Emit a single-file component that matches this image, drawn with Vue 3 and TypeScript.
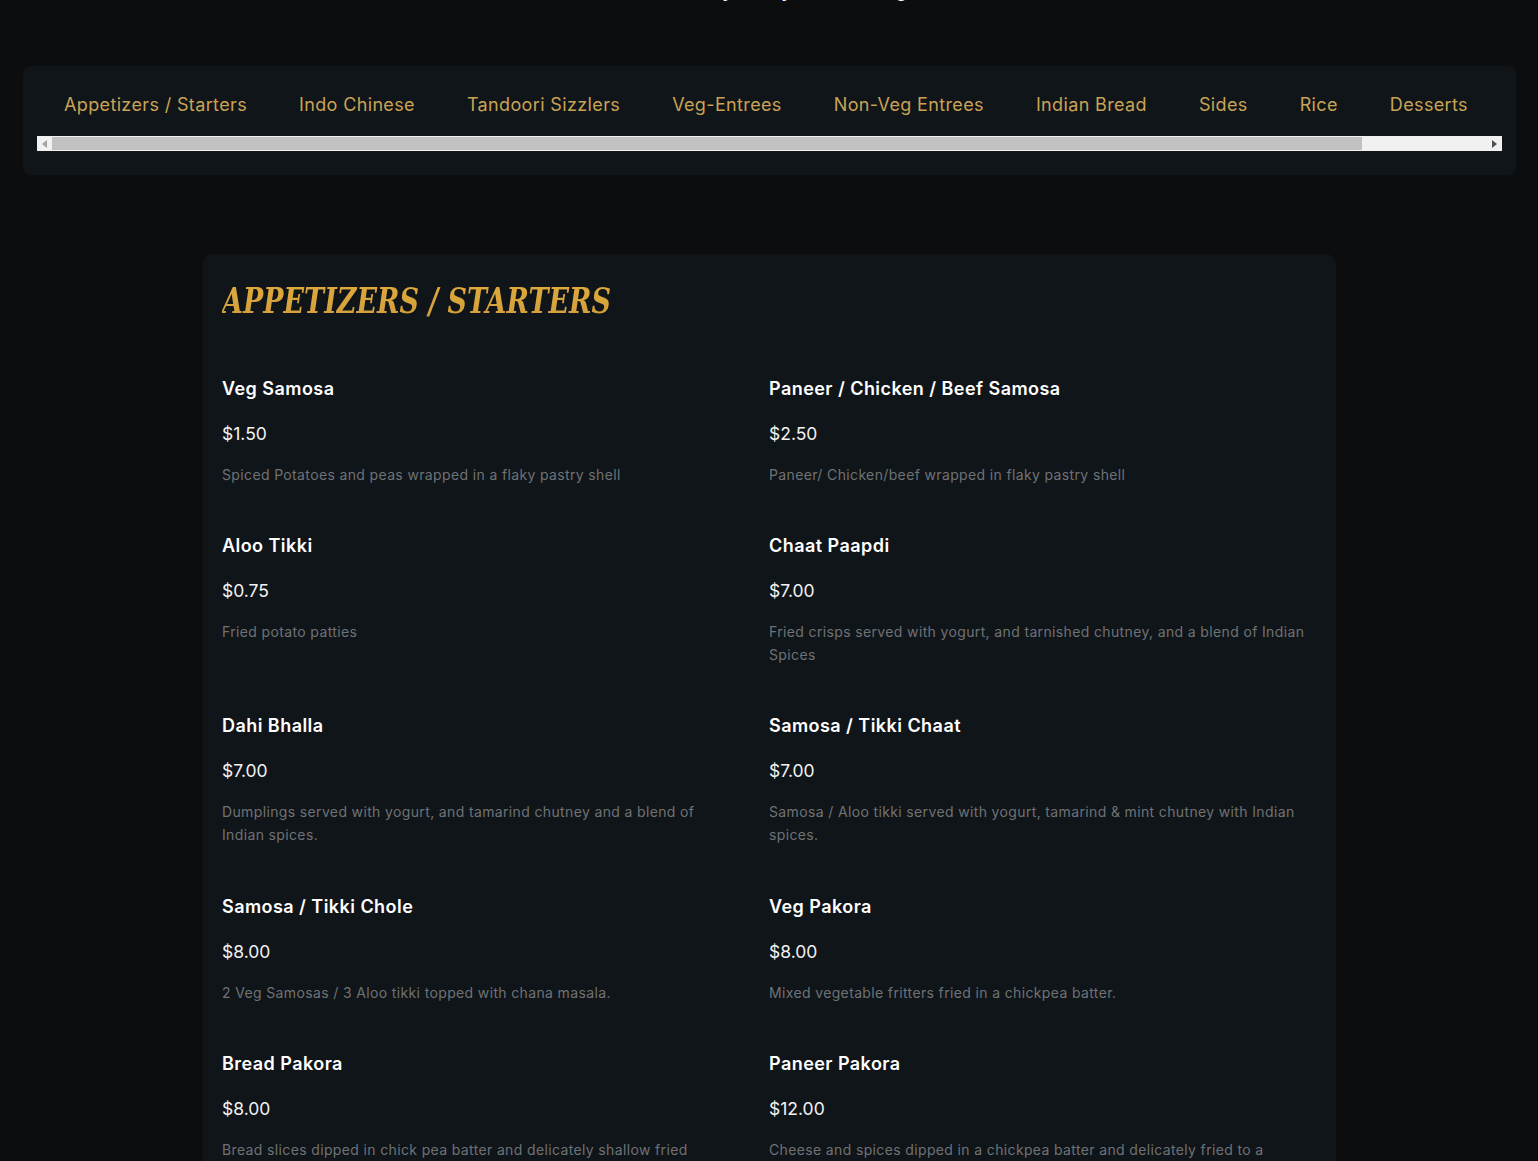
<script setup lang="ts">
interface Dish {
  name: string
  price: string
  desc: string
}

const tabs = [
  'Appetizers / Starters',
  'Indo Chinese',
  'Tandoori Sizzlers',
  'Veg-Entrees',
  'Non-Veg Entrees',
  'Indian Bread',
  'Sides',
  'Rice',
  'Desserts',
]

const dishes: Dish[] = [
  { name: 'Veg Samosa', price: '$1.50', desc: 'Spiced Potatoes and peas wrapped in a flaky pastry shell' },
  { name: 'Paneer / Chicken / Beef Samosa', price: '$2.50', desc: 'Paneer/ Chicken/beef wrapped in flaky pastry shell' },
  { name: 'Aloo Tikki', price: '$0.75', desc: 'Fried potato patties' },
  { name: 'Chaat Paapdi', price: '$7.00', desc: 'Fried crisps served with yogurt, and tarnished chutney, and a blend of Indian Spices' },
  { name: 'Dahi Bhalla', price: '$7.00', desc: 'Dumplings served with yogurt, and tamarind chutney and a blend of Indian spices.' },
  { name: 'Samosa / Tikki Chaat', price: '$7.00', desc: 'Samosa / Aloo tikki served with yogurt, tamarind & mint chutney with Indian spices.' },
  { name: 'Samosa / Tikki Chole', price: '$8.00', desc: '2 Veg Samosas / 3 Aloo tikki topped with chana masala.' },
  { name: 'Veg Pakora', price: '$8.00', desc: 'Mixed vegetable fritters fried in a chickpea batter.' },
  { name: 'Bread Pakora', price: '$8.00', desc: 'Bread slices dipped in chick pea batter and delicately shallow fried' },
  { name: 'Paneer Pakora', price: '$12.00', desc: 'Cheese and spices dipped in a chickpea batter and delicately fried to a' },
]
</script>

<template>
  <div class="page">
    <p class="tagline">Most Truly Tasty Fine Dining</p>

    <nav class="tabs-card">
      <ul class="tabs">
        <li v-for="tab in tabs" :key="tab" class="tab">{{ tab }}</li>
      </ul>
      <div class="scrollbar">
        <span class="arrow arrow-left"></span>
        <div class="track"><div class="thumb"></div></div>
        <span class="arrow arrow-right"></span>
      </div>
    </nav>

    <section class="menu-card">
      <h2 class="menu-title">Appetizers / Starters</h2>
      <div class="dish-grid">
        <article v-for="dish in dishes" :key="dish.name" class="dish">
          <h3 class="dish-name">{{ dish.name }}</h3>
          <p class="dish-price">{{ dish.price }}</p>
          <p class="dish-desc">{{ dish.desc }}</p>
        </article>
      </div>
    </section>
  </div>
</template>

<style>
html,
body {
  margin: 0;
  background: #0c0d0e;
}
</style>

<style scoped>
.page {
  height: 1161px;
  overflow: hidden;
  background: #0c0d0e;
  font-family: Inter, "Noto Sans", sans-serif;
  color: #fff;
}

.tagline {
  margin: -25px 0 0;
  height: 91px;
  line-height: 30px;
  text-align: center;
  font-size: 20px;
  font-weight: 500;
  letter-spacing: 0.2px;
}

.tabs-card {
  margin: 0 22px 0 23px;
  height: 109px;
  box-sizing: border-box;
  padding: 14px 14px 0;
  background: #101519;
  border-radius: 8px;
}

.tabs {
  list-style: none;
  margin: 0;
  padding: 0 0 0 27px;
  height: 56px;
  display: flex;
  gap: 52px;
}

.tab {
  font-size: 18px;
  line-height: 49px;
  letter-spacing: 0.36px;
  color: #c9a355;
  white-space: nowrap;
}

.scrollbar {
  height: 15px;
  display: flex;
  align-items: center;
  background: #f1f1f1;
}

.arrow {
  flex: none;
  width: 15px;
  display: flex;
  justify-content: center;
}

.arrow::before {
  content: "";
  border-style: solid;
  border-color: transparent;
  border-width: 4px 0;
}

.arrow-left::before {
  border-right: 5px solid #a3a3a3;
}

.arrow-right::before {
  border-left: 5px solid #505050;
}

.track {
  flex: 1;
  height: 13px;
}

.thumb {
  width: 1310px;
  height: 100%;
  background: #c1c1c1;
}

.menu-card {
  width: 1133px;
  margin: 79px 0 0 203px;
  box-sizing: border-box;
  padding: 23px 19px 0;
  background: #101519;
  border-radius: 10px;
}

.menu-title {
  margin: 0 0 48.5px;
  font-family: "DejaVu Serif Condensed", "DejaVu Serif", "Liberation Serif", serif;
  font-style: italic;
  font-weight: 700;
  font-size: 35px;
  line-height: 48px;
  text-transform: uppercase;
  background: linear-gradient(180deg, #e0ac3c, #d09c3c);
  -webkit-background-clip: text;
  background-clip: text;
  color: transparent;
  transform: scaleX(0.857);
  transform-origin: left center;
}

.dish-grid {
  display: grid;
  grid-template-columns: 515px 1fr;
  column-gap: 32px;
}

.dish {
  padding-bottom: 45.4px;
}

.dish-name {
  margin: 0 0 16px;
  font-size: 18px;
  line-height: 30px;
  font-weight: 600;
  letter-spacing: 0.45px;
  color: #fff;
}

.dish-price {
  margin: 0 0 16px;
  font-size: 17.5px;
  line-height: 27px;
  color: #f2f2f2;
}

.dish-desc {
  margin: 0;
  font-size: 14px;
  line-height: 23px;
  letter-spacing: 0.36px;
  color: #6f7275;
}
</style>
